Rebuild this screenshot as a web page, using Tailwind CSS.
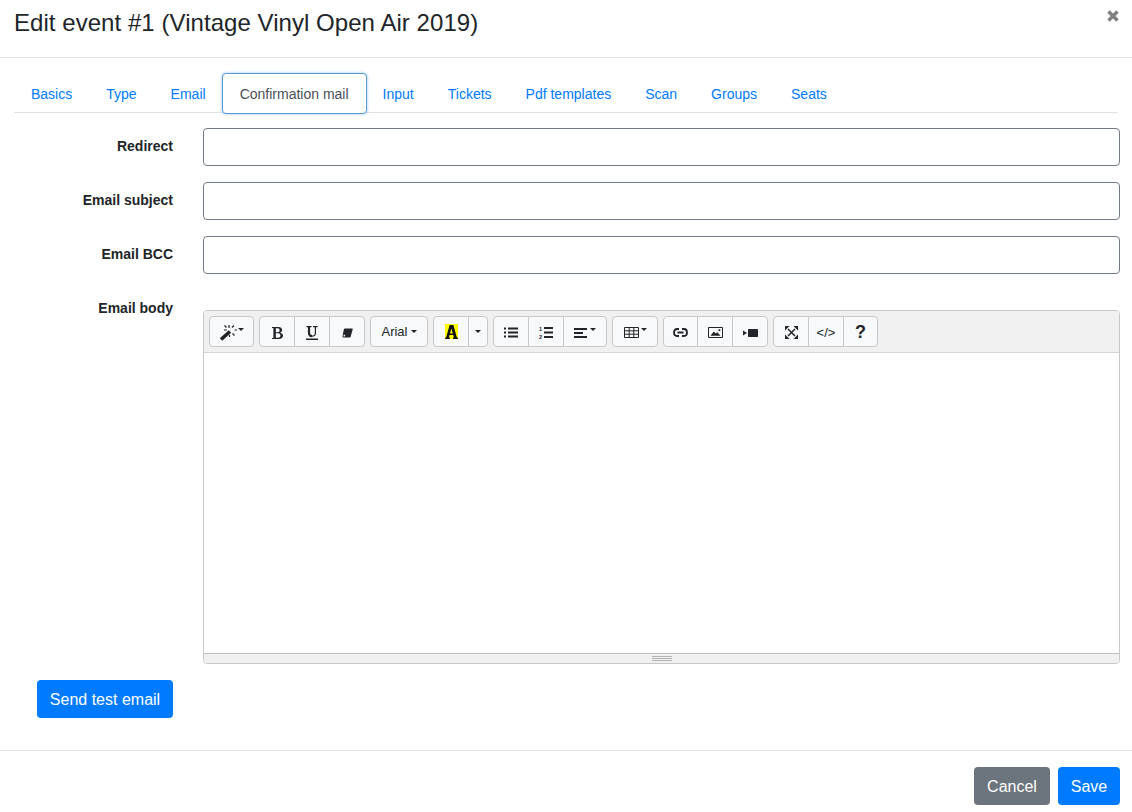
<!DOCTYPE html>
<html lang="en">
  <head>
    <meta charset="UTF-8" />
    <meta name="viewport" content="width=device-width, initial-scale=1.0" />
    <title>Edit event</title>
    <script src="https://cdn.jsdelivr.net/npm/@tailwindcss/browser@4"></script>
  </head>

  <body class="bg-white font-['Liberation_Sans',Arial,sans-serif] text-[#212529] h-[812px] overflow-hidden">
    <!-- modal header -->
    <div class="h-[58px] border-b border-[#dee2e6] pl-[14px] pr-[12px] flex justify-between">
      <h1 class="text-[24px] leading-[36px] mt-[5px] font-normal tracking-[0.05px]">Edit event #1 (Vintage Vinyl Open Air 2019)</h1>
      <svg class="mt-[10px] mr-[1px] w-[12px] h-[12px]" viewBox="0 0 12 12">
        <path d="M1.5 1.5 L10.5 10.5 M10.5 1.5 L1.5 10.5" stroke="#808080" stroke-width="3.4" />
      </svg>
    </div>

    <!-- tabs -->
    <div class="mx-[14px] mt-[15px] h-[40px] border-b border-[#dee2e6] flex text-[14px] text-[#007bff]">
      <a class="h-[40px] pl-[17px] pr-[17px] leading-[42px]">Basics</a>
      <a class="h-[40px] pl-[17px] pr-[17px] leading-[42px]">Type</a>
      <a class="h-[40px] pl-[17px] pr-[16px] leading-[42px]">Email</a>
      <a class="h-[41px] w-[145px] text-center leading-[40px] text-[#495057] bg-white border border-[#5b9bd5] rounded-[4px] shadow-[0_0_3px_rgba(0,123,255,0.45)]">Confirmation mail</a>
      <a class="h-[40px] pl-[16px] pr-[17px] leading-[42px]">Input</a>
      <a class="h-[40px] pl-[17px] pr-[17px] leading-[42px]">Tickets</a>
      <a class="h-[40px] pl-[17px] pr-[17px] leading-[42px]">Pdf templates</a>
      <a class="h-[40px] pl-[17px] pr-[17px] leading-[42px]">Scan</a>
      <a class="h-[40px] pl-[17px] pr-[17px] leading-[42px]">Groups</a>
      <a class="h-[40px] pl-[17px] pr-[17px] leading-[42px]">Seats</a>
    </div>

    <!-- form -->
    <form class="pl-[14px] pr-[12px] pt-[15px] text-[14px]">
      <div class="flex gap-[30px] mb-[16px]">
        <label class="w-[159px] text-right font-bold leading-[36px]">Redirect</label>
        <input class="flex-1 h-[38px] border border-[#737c85] rounded-[4px] bg-white" />
      </div>
      <div class="flex gap-[30px] mb-[16px]">
        <label class="w-[159px] text-right font-bold leading-[36px]">Email subject</label>
        <input class="flex-1 h-[38px] border border-[#737c85] rounded-[4px] bg-white" />
      </div>
      <div class="flex gap-[30px] mb-[16px]">
        <label class="w-[159px] text-right font-bold leading-[36px]">Email BCC</label>
        <input class="flex-1 h-[38px] border border-[#737c85] rounded-[4px] bg-white" />
      </div>
      <div class="flex gap-[30px]">
        <label class="w-[159px] text-right font-bold leading-[36px]">Email body</label>
        <!-- summernote style editor -->
        <div class="flex-1 mt-[20px] h-[354px] border border-[#c8c8c8] rounded-[4px] flex flex-col overflow-hidden">
          <div class="h-[42px] bg-[#f0f0f0] border-b border-[#d4d4d4] pl-[5px] pt-[5px] flex gap-[5px] text-[#212529] [&_svg]:translate-y-[1px]">
            <div class="flex h-[31px] border border-[#c6c8ca] rounded-[4px] bg-[#f8f9fa]">
              <div class="w-[43px] flex items-center justify-center gap-[1px]">
                <svg width="18" height="17" viewBox="0 0 18 17">
                  <path d="M2 15.5 L11 7.5" stroke="#212529" stroke-width="3.6" fill="none" />
                  <path d="M10 1 V4 M15.5 6 H18 M5 6 H8 M5.5 1.5 L7.5 3.5 M15 1.5 L13 3.5 M15.5 11.5 L13.5 9.5 M10.5 11 V13" stroke="#212529" stroke-width="1.2" fill="none" />
                </svg>
                <span class="border-x-[3.5px] border-x-transparent border-t-[3.5px] border-t-[#212529] mb-[5px]"></span>
              </div>
            </div>
            <div class="flex h-[31px] border border-[#c6c8ca] rounded-[4px] bg-[#f8f9fa]">
              <div class="w-[34px] flex items-center justify-center">
                <svg width="11" height="12" viewBox="0 0 12 13" preserveAspectRatio="none"><path fill-rule="evenodd" fill="#212529" d="M0 0 H7 C10 0 11 1.6 11 3.3 C11 4.8 10 5.7 8.8 6.1 C10.6 6.5 12 7.5 12 9.3 C12 11.5 10.2 13 7.5 13 H0 V11.8 H1.5 V1.2 H0 Z M4.2 1.4 V5.6 H6.2 C7.6 5.6 8.3 4.8 8.3 3.5 C8.3 2.2 7.6 1.4 6.2 1.4 Z M4.2 6.9 V11.6 H6.6 C8.2 11.6 9.2 10.8 9.2 9.2 C9.2 7.7 8.2 6.9 6.6 6.9 Z" /></svg>
              </div>
              <div class="w-[35px] border-l border-[#c6c8ca] flex items-center justify-center">
                <svg width="12" height="14" viewBox="0 0 12 14"><path fill="none" stroke="#212529" stroke-width="2.2" d="M3 .9 V7 C3 9.3 4.3 10.2 6 10.2" /><path fill="none" stroke="#212529" stroke-width="1.2" d="M6 10.2 C7.7 10.2 9.4 9.3 9.4 7 V.9" /><path stroke="#212529" stroke-width="1.2" d="M.5 .6 H5.5 M7 .6 H11.5" /><path stroke="#212529" stroke-width="1.4" d="M0 13.2 H12" /></svg>
              </div>
              <div class="w-[35px] border-l border-[#c6c8ca] flex items-center justify-center">
                <svg width="11" height="10" viewBox="0 0 12 10"><path fill="#212529" d="M3.2 0 H11 Q12 0 11.7 1 L9.4 9 Q9.1 10 8 10 H1.5 Q.2 10 .5 8.8 L2 1.2 Q2.2 0 3.2 0 Z" /><path fill="#f8f9fa" d="M1.9 6.8 H3.6 L3 8.7 H1.5 Z" /></svg>
              </div>
            </div>
            <div class="flex h-[31px] w-[58px] border border-[#c6c8ca] rounded-[4px] bg-[#f8f9fa] items-center justify-center gap-[3px] text-[13px]">
              <span>Arial</span>
              <span class="border-x-[3.5px] border-x-transparent border-t-[3.5px] border-t-[#212529]"></span>
            </div>
            <div class="flex h-[31px] border border-[#c6c8ca] rounded-[4px] bg-[#f8f9fa]">
              <div class="w-[34px] flex items-center justify-center">
                <span class="w-[13px] h-[15px] bg-[#ffff00] flex justify-center">
                  <svg class="!translate-y-0" width="13" height="15" viewBox="0 0 14 15" preserveAspectRatio="none"><path fill-rule="evenodd" fill="#111" d="M5 1 H9 L12.8 13.4 H13.8 V15 H8.6 V13.4 H9.6 L8.9 11 H4.9 L4.2 13.4 H5.3 V15 H.2 V13.4 H1.2 Z M6.9 4.6 L5.4 9.4 H8.4 Z" /></svg>
                </span>
              </div>
              <div class="w-[19px] border-l border-[#c6c8ca] flex items-center justify-center">
                <span class="border-x-[3.5px] border-x-transparent border-t-[3.5px] border-t-[#212529]"></span>
              </div>
            </div>
            <div class="flex h-[31px] border border-[#c6c8ca] rounded-[4px] bg-[#f8f9fa]">
              <div class="w-[34px] flex items-center justify-center">
                <svg width="14" height="11" viewBox="0 0 14 11"><path stroke="#212529" stroke-width="2" d="M0 1.5 H2 M4 1.5 H14 M0 5.5 H2 M4 5.5 H14 M0 9.5 H2 M4 9.5 H14" /></svg>
              </div>
              <div class="w-[35px] border-l border-[#c6c8ca] flex items-center justify-center">
                <svg width="14" height="13" viewBox="0 0 14 13"><path stroke="#212529" stroke-width="2" d="M5 2 H14 M5 6.5 H14 M5 11 H14" /><text x="0" y="5" font-size="5.5" font-weight="700" fill="#212529" font-family="Liberation Sans">1</text><text x="0" y="13" font-size="5.5" font-weight="700" fill="#212529" font-family="Liberation Sans">2</text></svg>
              </div>
              <div class="w-[43px] border-l border-[#c6c8ca] flex items-center justify-center gap-[3px]">
                <svg width="13" height="10" viewBox="0 0 13 10"><path stroke="#212529" stroke-width="2" d="M0 1 H13 M0 5 H9 M0 9 H13" /></svg>
                <span class="border-x-[3.5px] border-x-transparent border-t-[3.5px] border-t-[#212529] mb-[4px]"></span>
              </div>
            </div>
            <div class="flex h-[31px] w-[46px] border border-[#c6c8ca] rounded-[4px] bg-[#f8f9fa] items-center justify-center gap-[2px]">
              <svg width="15" height="11" viewBox="0 0 15 11"><path fill="none" stroke="#212529" stroke-width="1" d="M.5 .5 H14.5 V10.5 H.5 Z M.5 3.8 H14.5 M.5 7.2 H14.5 M5.2 .5 V10.5 M9.8 .5 V10.5" /></svg>
              <span class="border-x-[3.5px] border-x-transparent border-t-[3.5px] border-t-[#212529] mb-[5px]"></span>
            </div>
            <div class="flex h-[31px] border border-[#c6c8ca] rounded-[4px] bg-[#f8f9fa]">
              <div class="w-[33px] flex items-center justify-center">
                <svg width="15" height="9" viewBox="0 0 15 9"><path fill="none" stroke="#212529" stroke-width="1.8" d="M6 1 H4 C2 1 1 2.5 1 4.5 C1 6.5 2 8 4 8 H6 M9 1 H11 C13 1 14 2.5 14 4.5 C14 6.5 13 8 11 8 H9 M4.5 4.5 H10.5" /></svg>
              </div>
              <div class="w-[35px] border-l border-[#c6c8ca] flex items-center justify-center">
                <svg width="15" height="11" viewBox="0 0 15 11"><path fill="none" stroke="#212529" stroke-width="1" d="M.5 .5 H14.5 V10.5 H.5 Z" /><path fill="#212529" d="M2.5 8.8 L5.8 4.5 L7.8 6.6 L9.4 5.2 L12.5 8.8 Z" /><rect x="10.5" y="2.3" width="1.8" height="1.8" fill="#212529" /></svg>
              </div>
              <div class="w-[35px] border-l border-[#c6c8ca] flex items-center justify-center">
                <svg width="15" height="8" viewBox="0 0 15 8"><rect x="5" y="0" width="10" height="8" rx=".8" fill="#212529" /><path fill="#212529" d="M0 1.5 L4 4 L0 6.5 Z" /></svg>
              </div>
            </div>
            <div class="flex h-[31px] border border-[#c6c8ca] rounded-[4px] bg-[#f8f9fa]">
              <div class="w-[34px] flex items-center justify-center">
                <svg width="13" height="13" viewBox="0 0 13 13"><path stroke="#212529" stroke-width="1.5" d="M3 3 L10 10 M10 3 L3 10" /><path fill="#212529" d="M0 0 H4.5 L0 4.5 Z M13 0 V4.5 L8.5 0 Z M0 13 V8.5 L4.5 13 Z M13 13 H8.5 L13 8.5 Z" /></svg>
              </div>
              <div class="w-[35px] border-l border-[#c6c8ca] flex items-center justify-center text-[13px] pt-[2px]">&lt;/&gt;</div>
              <div class="w-[34px] border-l border-[#c6c8ca] flex items-center justify-center text-[18px] font-bold pt-[2px]">?</div>
            </div>
          </div>
          <div class="flex-1 bg-white"></div>
          <div class="h-[10px] bg-[#f0f0f0] border-t border-[#c0c0c0] flex flex-col items-center pt-[2px] gap-[1px]">
            <span class="w-[20px] h-px bg-[#b4b4b4]"></span>
            <span class="w-[20px] h-px bg-[#b4b4b4]"></span>
            <span class="w-[20px] h-px bg-[#b4b4b4]"></span>
          </div>
        </div>
      </div>
      <div class="pl-[23px] mt-[16px]">
        <button type="button" class="w-[136px] h-[38px] pt-[1px] bg-[#007bff] text-white text-[16px] rounded-[4px]">Send test email</button>
      </div>
    </form>

    <!-- modal footer -->
    <div class="mt-[32px] border-t border-[#dee2e6] pt-[16px] pr-[12px] flex justify-end gap-[8px] text-[16px] text-white">
      <button type="button" class="w-[76px] h-[38px] pt-[1px] bg-[#6c757d] rounded-[4px]">Cancel</button>
      <button type="button" class="w-[62px] h-[38px] pt-[1px] bg-[#007bff] rounded-[4px]">Save</button>
    </div>
  </body>
</html>
